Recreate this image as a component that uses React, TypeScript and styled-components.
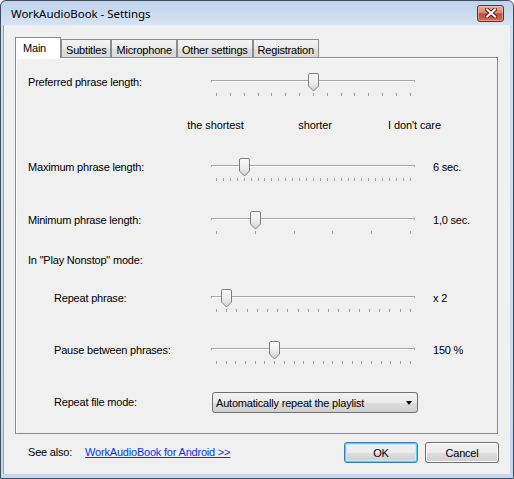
import React from "react";
import styled, { createGlobalStyle } from "styled-components";

const Global = createGlobalStyle`
  html, body { margin: 0; padding: 0; background: #ffffff; }
  body {
    width: 514px; height: 479px; overflow: hidden;
    font-family: "Liberation Sans", Arial, sans-serif;
    font-size: 11px; color: #000;
  }
  * { box-sizing: border-box; }
`;

const Window = styled.div`
  width: 514px;
  height: 479px;
  display: flex;
  flex-direction: column;
  border: 1px solid #3f4d5f;
  border-radius: 6px 6px 0 0;
  background: linear-gradient(#bfd3ec 0px, #d6e3f3 24px, #cddff2 25px, #c5d8ef 100%);
  padding: 0 3px 4px 2px;
`;

const TitleBar = styled.div`
  height: 24px;
  display: flex;
  align-items: center;
  padding-left: 8px;
  padding-right: 6px;
`;

const Title = styled.div`
  flex: 1;
  font-family: "Noto Sans", "Open Sans", sans-serif;
  font-size: 11.5px;
  color: #000;
  letter-spacing: -0.05px;
`;

const CloseButton = styled.div`
  width: 27px;
  height: 17px;
  border: 1px solid #6b2a24;
  border-radius: 3px;
  background: linear-gradient(#e9a996 0%, #dc8673 45%, #c84a36 52%, #d06a52 100%);
  box-shadow: inset 0 0 0 1px rgba(255, 220, 210, 0.45);
  display: flex;
  align-items: center;
  justify-content: center;
`;

const Client = styled.div`
  flex: 1;
  display: flex;
  flex-direction: column;
  background: #f0f0f0;
  border-left: 1px solid #8fa3bb;
  padding: 12px 12px 0 11px;
`;

const TabRow = styled.div`
  height: 20px;
  display: flex;
  align-items: flex-end;
  position: relative;
  z-index: 1;
`;

const Tab = styled.div<{ $active?: boolean }>`
  border: 1px solid #898c95;
  border-bottom: none;
  display: flex;
  align-items: center;
  white-space: nowrap;
  letter-spacing: -0.2px;
  height: ${(p) => (p.$active ? "21px" : "18px")};
  margin-bottom: ${(p) => (p.$active ? "-1px" : "0")};
  padding: ${(p) => (p.$active ? "0 14px 0 7px" : "2px 4px 0 4px")};
  background: ${(p) =>
    p.$active ? "#ffffff" : "linear-gradient(#f3f3f3, #ebebeb 50%, #dddddd 51%, #d9d9d9)"};
`;

const Panel = styled.div`
  height: 377px;
  border: 1px solid #898c95;
  background: #f0f0f0;
  box-shadow: inset 1px 1px 0 #ffffff;
  display: flex;
  flex-direction: column;
  padding: 15px 0 0 12px;
`;

const Row = styled.div<{ $top?: number }>`
  display: grid;
  grid-template-columns: 183px 204px auto;
  align-items: start;
  margin-top: ${(p) => p.$top ?? 0}px;
`;

const Label = styled.div<{ $indent?: number; $lh?: number }>`
  line-height: ${(p) => p.$lh ?? 18}px;
  padding-left: ${(p) => p.$indent ?? 0}px;
  white-space: nowrap;
  letter-spacing: -0.2px;
`;

const Value = styled.div`
  line-height: 18px;
  padding-left: 18px;
  white-space: nowrap;
  letter-spacing: -0.2px;
`;

const SliderBox = styled.div`
  position: relative;
  width: 204px;
  height: 23px;
`;

const Track = styled.div`
  margin-top: 7px;
  height: 2px;
  border-top: 1px solid #a8a8a8;
  border-left: 1px solid #a8a8a8;
  border-right: 1px solid #a8a8a8;
  background: #ffffff;
`;

const Ticks = styled.div`
  display: flex;
  justify-content: space-between;
  height: 3px;
  margin: 11px 4px 0 5px;
`;

const Tick = styled.span`
  width: 1px;
  height: 3px;
  background: #a0a0a0;
`;

const Thumb = styled.svg`
  position: absolute;
  top: 0;
  width: 11px;
  height: 19px;
`;

const ScaleTrack = styled.div`
  display: flex;
  justify-content: space-between;
  margin: 0 0 0 4px;
  width: 200px;
  line-height: 14px;
`;

const ScaleMark = styled.span`
  width: 1px;
  display: flex;
  justify-content: center;
  white-space: nowrap;
  letter-spacing: -0.1px;
`;

const Combo = styled.div`
  margin-left: 1px;
  width: 206px;
  height: 21px;
  border: 1px solid #707070;
  border-radius: 3px;
  background: linear-gradient(#f2f2f2, #ebebeb 50%, #dddddd 51%, #cfcfcf);
  display: flex;
  align-items: center;
  padding: 0 5px 0 3px;
  white-space: nowrap;
  letter-spacing: -0.2px;
`;

const ComboText = styled.span`
  flex: 1;
`;

const ComboArrow = styled.span`
  width: 0;
  height: 0;
  border-left: 3.5px solid transparent;
  border-right: 3.5px solid transparent;
  border-top: 4px solid #000;
`;

const BottomBar = styled.div`
  flex: 1;
  display: flex;
  align-items: flex-start;
  padding: 8px 0 0 13px;
  margin-right: -1px;
`;

const BottomText = styled.span`
  line-height: 21px;
  letter-spacing: -0.2px;
  margin-right: 13px;
`;

const Link = styled.a`
  line-height: 21px;
  color: #0033ff;
  text-decoration: underline;
  letter-spacing: -0.2px;
  flex: 1;
`;

const Button = styled.button<{ $default?: boolean }>`
  width: 74px;
  height: 21px;
  margin-left: 7px;
  font-family: "Liberation Sans", Arial, sans-serif;
  font-size: 11px;
  color: #000;
  letter-spacing: -0.2px;
  padding: 0;
  border-radius: 3px;
  border: 1px solid ${(p) => (p.$default ? "#3c7fb1" : "#707070")};
  background: linear-gradient(#f2f2f2, #ebebeb 50%, #dddddd 51%, #cfcfcf);
  box-shadow: ${(p) =>
    p.$default ? "inset 0 0 0 1px #48d7f9, inset 0 0 0 2px #c5ecfb" : "inset 0 0 0 1px #fcfcfc"};
`;

function Slider({ ticks, index }: { ticks: number; index: number }) {
  const f = index / (ticks - 1);
  return (
    <SliderBox>
      <Track />
      <Thumb viewBox="0 0 11 19" style={{ left: Math.round(f * 194) }}>
        <defs>
          <linearGradient id="tg" x1="0" y1="0" x2="0" y2="1">
            <stop offset="0" stopColor="#fbfbfb" />
            <stop offset="0.5" stopColor="#eeeeee" />
            <stop offset="1" stopColor="#d2d2d2" />
          </linearGradient>
        </defs>
        <path
          d="M0.5 2 Q0.5 0.5 2 0.5 H9 Q10.5 0.5 10.5 2 V13 L5.5 18 L0.5 13 Z"
          fill="url(#tg)"
          stroke="#7e7e7e"
          strokeWidth="1"
        />
      </Thumb>
      <Ticks>
        {Array.from({ length: ticks }).map((_, i) => (
          <Tick key={i} />
        ))}
      </Ticks>
    </SliderBox>
  );
}

export default function App() {
  return (
    <>
      <Global />
      <Window>
        <TitleBar>
          <Title>WorkAudioBook - Settings</Title>
          <CloseButton>
            <svg width="12" height="10" viewBox="0 0 12 10">
              <path d="M2 1.5 L10 8.5 M10 1.5 L2 8.5" stroke="#5a1e18" strokeWidth="4" strokeLinecap="square" />
              <path d="M2 1.5 L10 8.5 M10 1.5 L2 8.5" stroke="#ffffff" strokeWidth="2" strokeLinecap="square" />
            </svg>
          </CloseButton>
        </TitleBar>
        <Client>
          <TabRow>
            <Tab $active>Main</Tab>
            <Tab>Subtitles</Tab>
            <Tab>Microphone</Tab>
            <Tab>Other settings</Tab>
            <Tab>Registration</Tab>
          </TabRow>
          <Panel>
            <Row>
              <Label>Preferred phrase length:</Label>
              <Slider ticks={15} index={7} />
            </Row>
            <Row $top={22}>
              <span />
              <ScaleTrack>
                <ScaleMark>the shortest</ScaleMark>
                <ScaleMark>shorter</ScaleMark>
                <ScaleMark>I don't care</ScaleMark>
              </ScaleTrack>
            </Row>
            <Row $top={26}>
              <Label>Maximum phrase length:</Label>
              <Slider ticks={29} index={4} />
              <Value>6 sec.</Value>
            </Row>
            <Row $top={30}>
              <Label>Minimum phrase length:</Label>
              <Slider ticks={6} index={1} />
              <Value>1,0 sec.</Value>
            </Row>
            <Row $top={17}>
              <Label>In "Play Nonstop" mode:</Label>
            </Row>
            <Row $top={20}>
              <Label $indent={26}>Repeat phrase:</Label>
              <Slider ticks={20} index={1} />
              <Value>x 2</Value>
            </Row>
            <Row $top={29}>
              <Label $indent={26}>Pause between phrases:</Label>
              <Slider ticks={21} index={6} />
              <Value>150 %</Value>
            </Row>
            <Row $top={28}>
              <Label $indent={26} $lh={21}>Repeat file mode:</Label>
              <Combo>
                <ComboText>Automatically repeat the playlist</ComboText>
                <ComboArrow />
              </Combo>
            </Row>
          </Panel>
          <BottomBar>
            <BottomText>See also:</BottomText>
            <Link href="#">WorkAudioBook for Android &gt;&gt;</Link>
            <Button $default>OK</Button>
            <Button>Cancel</Button>
          </BottomBar>
        </Client>
      </Window>
    </>
  );
}
